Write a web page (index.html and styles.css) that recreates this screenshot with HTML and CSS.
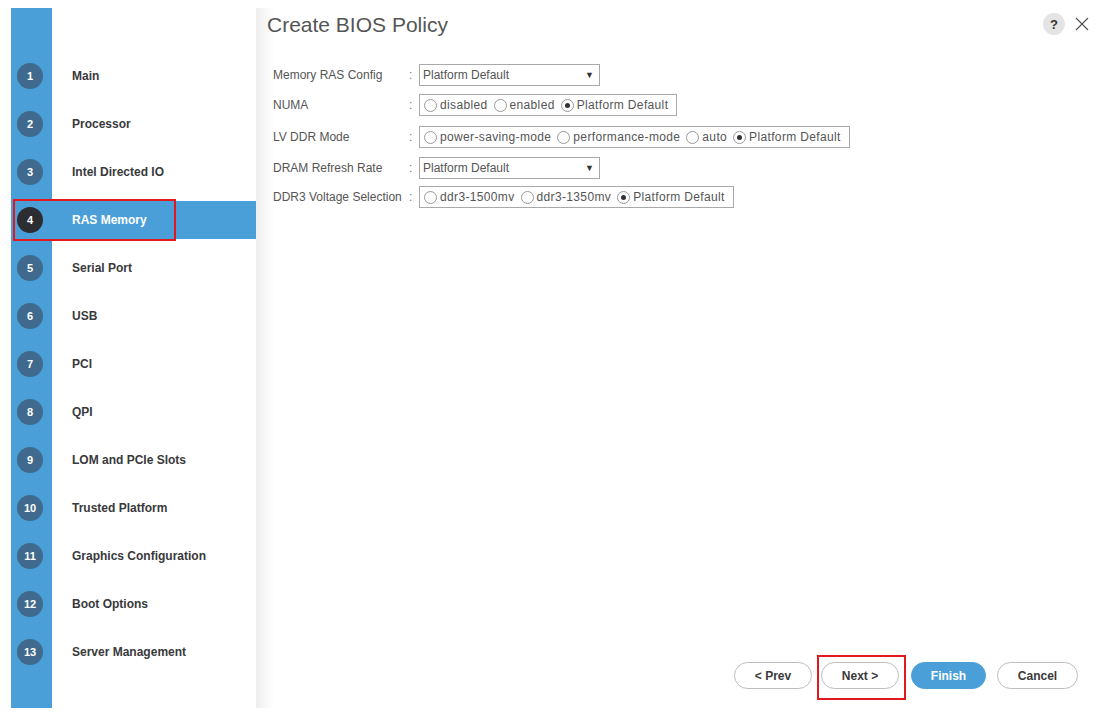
FILE: index.html
```html
<!DOCTYPE html>
<html>
<head>
<meta charset="utf-8">
<link rel="stylesheet" href="styles.css">
</head>
<body>
<div class="frame">
  <nav class="sidebar">
    <ul class="steps">
      <li class="step"><span class="num">1</span><span class="label">Main</span></li>
      <li class="step"><span class="num">2</span><span class="label">Processor</span></li>
      <li class="step"><span class="num">3</span><span class="label">Intel Directed IO</span></li>
      <li class="step active"><span class="num">4</span><span class="label">RAS Memory</span><span class="mark"></span></li>
      <li class="step"><span class="num">5</span><span class="label">Serial Port</span></li>
      <li class="step"><span class="num">6</span><span class="label">USB</span></li>
      <li class="step"><span class="num">7</span><span class="label">PCI</span></li>
      <li class="step"><span class="num">8</span><span class="label">QPI</span></li>
      <li class="step"><span class="num">9</span><span class="label">LOM and PCIe Slots</span></li>
      <li class="step"><span class="num">10</span><span class="label">Trusted Platform</span></li>
      <li class="step"><span class="num">11</span><span class="label">Graphics Configuration</span></li>
      <li class="step"><span class="num">12</span><span class="label">Boot Options</span></li>
      <li class="step"><span class="num">13</span><span class="label">Server Management</span></li>
    </ul>
  </nav>
  <main class="content">
    <header class="head">
      <h1 class="title">Create BIOS Policy</h1>
      <div class="tools">
        <span class="help">?</span>
        <svg class="close" width="14" height="14" viewBox="0 0 14 14"><path d="M1 1L13 13M13 1L1 13" stroke="#555" stroke-width="1.2" fill="none"/></svg>
      </div>
    </header>
    <div class="form">
      <div class="lbl">Memory RAS Config</div><div class="colon">:</div>
      <div class="ctl"><div class="select">Platform Default<span class="arrow">▼</span></div></div>

      <div class="lbl">NUMA</div><div class="colon">:</div>
      <div class="ctl"><div class="radios">
        <span class="opt"><span class="radio"></span>disabled</span>
        <span class="opt"><span class="radio"></span>enabled</span>
        <span class="opt"><span class="radio on"></span>Platform Default</span>
      </div></div>

      <div class="lbl">LV DDR Mode</div><div class="colon">:</div>
      <div class="ctl"><div class="radios">
        <span class="opt"><span class="radio"></span>power-saving-mode</span>
        <span class="opt"><span class="radio"></span>performance-mode</span>
        <span class="opt"><span class="radio"></span>auto</span>
        <span class="opt"><span class="radio on"></span>Platform Default</span>
      </div></div>

      <div class="lbl">DRAM Refresh Rate</div><div class="colon">:</div>
      <div class="ctl"><div class="select">Platform Default<span class="arrow">▼</span></div></div>

      <div class="lbl">DDR3 Voltage Selection</div><div class="colon">:</div>
      <div class="ctl"><div class="radios">
        <span class="opt"><span class="radio"></span>ddr3-1500mv</span>
        <span class="opt"><span class="radio"></span>ddr3-1350mv</span>
        <span class="opt"><span class="radio on"></span>Platform Default</span>
      </div></div>
    </div>
    <footer class="actions">
      <button class="btn prev">&lt; Prev</button>
      <button class="btn next">Next &gt;<span class="mark2"></span></button>
      <button class="btn finish">Finish</button>
      <button class="btn cancel">Cancel</button>
    </footer>
  </main>
</div>
</body>
</html>
```
FILE: styles.css
```css
* { box-sizing: border-box; }
html, body { margin: 0; padding: 0; background: #fff; }
body {
  font-family: "Liberation Sans", Arial, sans-serif;
  width: 1104px;
  height: 727px;
  overflow: hidden;
}
.frame {
  display: flex;
  margin: 8px 0 0 11px;
  height: 700px;
}
.sidebar {
  width: 245px;
  flex: none;
  background: linear-gradient(to right, #4a9fd8 0, #4a9fd8 41px, #fff 41px);
}
.steps {
  list-style: none;
  margin: 0;
  padding: 49px 0 0 0;
}
.step {
  position: relative;
  display: flex;
  align-items: center;
  height: 38px;
  margin-bottom: 10px;
}
.num {
  width: 26px;
  height: 26px;
  margin-left: 6px;
  border-radius: 50%;
  background: #3f6a8d;
  color: #fff;
  font-size: 11px;
  font-weight: bold;
  display: flex;
  align-items: center;
  justify-content: center;
  flex: none;
}
.label {
  margin-left: 29px;
  font-size: 12px;
  font-weight: bold;
  color: #39393b;
}
.step.active { background: #4a9fd8; }
.step.active .num { background: #2c2d33; color: #fff; }
.step.active .label { color: #fff; }
.mark {
  position: absolute;
  left: 2px;
  top: -2px;
  width: 163px;
  height: 42px;
  border: 2px solid #e3181f;
}
.content {
  flex: 1;
  display: flex;
  flex-direction: column;
  background: linear-gradient(to right, #ededed 0, #f6f6f6 8px, #fff 18px);
  padding: 4px 15px 19px 0;
}
.head {
  display: flex;
  justify-content: space-between;
  align-items: flex-start;
}
.title {
  margin: 0 0 0 11px;
  font-size: 21px;
  line-height: 25px;
  font-weight: normal;
  color: #555;
}
.tools {
  display: flex;
  align-items: center;
  height: 22px;
  margin-top: 1px;
}
.help {
  width: 22px;
  height: 22px;
  border-radius: 50%;
  background: #e4e4e4;
  color: #333;
  font-size: 13px;
  font-weight: bold;
  display: flex;
  align-items: center;
  justify-content: center;
}
.close { margin-left: 10px; }
.form {
  display: grid;
  grid-template-columns: 136px 10px auto;
  grid-template-rows: 30px 32px 31px 29px 22px;
  align-items: start;
  justify-items: start;
  margin: 27px 0 0 17px;
  font-size: 12px;
  color: #555;
}
.lbl, .colon { line-height: 22px; }
.colon { color: #777; }
.ctl { height: 22px; }
.select {
  position: relative;
  width: 181px;
  height: 22px;
  border: 1px solid #a9a9a9;
  padding: 0 0 0 3px;
  line-height: 20px;
  color: #555;
}
.arrow {
  position: absolute;
  right: 5px;
  top: 0;
  font-size: 9px;
  color: #333;
}
.radios {
  display: flex;
  align-items: center;
  height: 22px;
  border: 1px solid #a9a9a9;
  padding: 0 8px 0 4px;
  gap: 6px;
  white-space: nowrap;
  letter-spacing: 0.35px;
}
.opt { display: flex; align-items: center; }
.radio {
  width: 13px;
  height: 13px;
  border-radius: 50%;
  border: 1px solid #9a9a9a;
  background: #fff;
  margin-right: 3px;
  position: relative;
}
.radio.on::after {
  content: "";
  position: absolute;
  left: 3px;
  top: 3px;
  width: 5px;
  height: 5px;
  border-radius: 50%;
  background: #333;
}
.actions {
  margin-top: auto;
  display: flex;
  justify-content: flex-end;
  padding-right: 11px;
}
.btn {
  position: relative;
  height: 27px;
  border-radius: 14px;
  border: 1px solid #bdbdbd;
  background: #fff;
  color: #3a3a3a;
  font-family: "Liberation Sans", Arial, sans-serif;
  font-size: 12px;
  font-weight: bold;
  padding: 0;
}
.prev { width: 78px; }
.next { width: 78px; margin-left: 9px; }
.finish { width: 75px; margin-left: 12px; background: #4a9fd8; border-color: #4a9fd8; color: #fff; }
.cancel { width: 81px; margin-left: 11px; }
.mark2 {
  position: absolute;
  left: -5px;
  top: -8px;
  width: 89px;
  height: 45px;
  border: 2px solid #e3181f;
}
```
